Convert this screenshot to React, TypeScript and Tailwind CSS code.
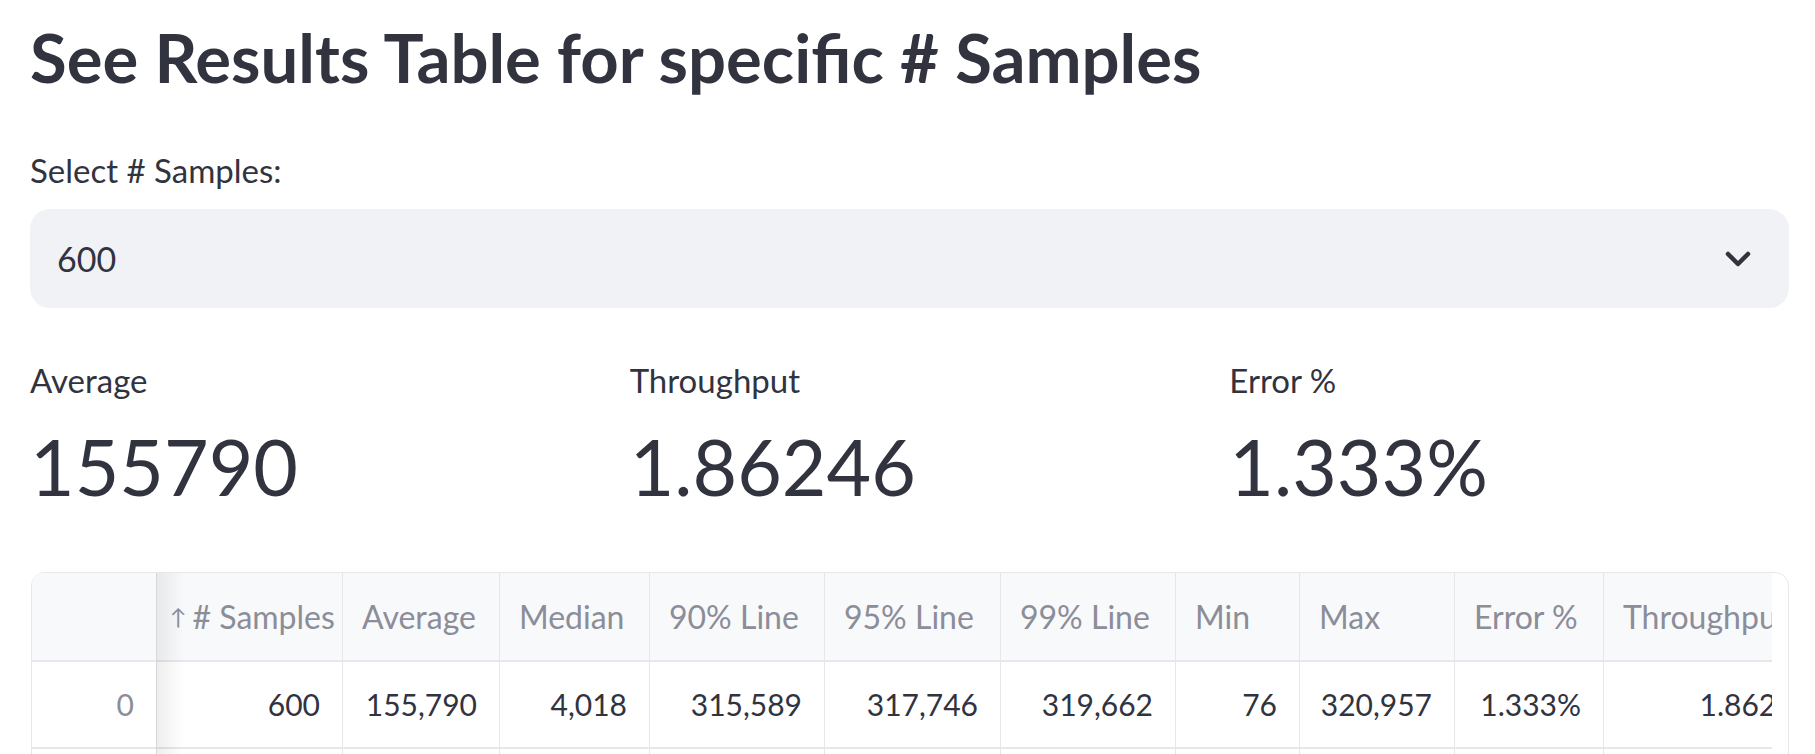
import React from "react";

const cols = [
  { name: "# Samples", w: 186, v: "600", arrow: true },
  { name: "Average", w: 157, v: "155,790" },
  { name: "Median", w: 150, v: "4,018" },
  { name: "90% Line", w: 175, v: "315,589" },
  { name: "95% Line", w: 176, v: "317,746" },
  { name: "99% Line", w: 175, v: "319,662" },
  { name: "Min", w: 124, v: "76" },
  { name: "Max", w: 155, v: "320,957" },
  { name: "Error %", w: 149, v: "1.333%" },
  { name: "Throughput", w: 230, v: "1.86246" },
];

export default function App() {
  return (
    <div
      className="bg-white text-[#31333F] w-[1815px] h-[754px] overflow-hidden pl-[30px] pr-[26px]"
      style={{ fontFamily: "Lato, 'Open Sans', sans-serif" }}
    >
      <div className="pt-[24px] h-[90px] text-[67px] leading-[66px] font-bold whitespace-nowrap">
        See Results Table for specific # Samples
      </div>
      <div className="mt-[64px] text-[33px] leading-[32px]">Select # Samples:</div>
      <div className="mt-[23px] h-[99px] rounded-[20px] bg-[#F0F2F6] flex items-center justify-between pl-[27px] pr-[37px]">
        <span className="text-[34px]">600</span>
        <svg width="28" height="18" viewBox="0 0 28 18" fill="none">
          <path d="M4 4 L14 14 L24 4" stroke="#31333F" strokeWidth="4.5" strokeLinecap="round" strokeLinejoin="round" />
        </svg>
      </div>
      <div className="mt-[56px] grid grid-cols-3 gap-[40px]">
        {[
          ["Average", "155790"],
          ["Throughput", "1.86246"],
          ["Error %", "1.333%"],
        ].map(([l, v]) => (
          <div key={l}>
            <div className="text-[33px] leading-[32px]">{l}</div>
            <div className="mt-[30px] text-[77px] leading-[80px]">{v}</div>
          </div>
        ))}
      </div>
      <div className="mt-[66px] ml-[1px] border border-[#E6E7EA] rounded-[14px] overflow-hidden pr-[16px]">
        <div className="overflow-hidden">
          <div className="flex text-[30px]">
            <div className="w-[125px] shrink-0 border-r border-[#E6E7EA] relative z-10 bg-white">
              <div className="h-[89px] bg-[#F8F9FB] border-b-2 border-[#E6E7EA]" />
              <div className="h-[87px] flex items-center justify-end pr-[22px] text-[#8B8D98] border-b-2 border-[#E6E7EA]">0</div>
              <div className="h-[87px] border-b-2 border-[#E6E7EA]" />
              <div className="absolute top-0 bottom-0 left-full w-[28px] bg-gradient-to-r from-[rgba(0,0,0,0.07)] to-transparent pointer-events-none" />
            </div>
            {cols.map((c) => (
              <div key={c.name} className="shrink-0 border-r border-[#E6E7EA]" style={{ width: c.w }}>
                <div className="h-[89px] bg-[#F8F9FB] border-b-2 border-[#E6E7EA] flex items-center pl-[13px] pr-0 text-[32px] text-[#8B8D98] whitespace-nowrap overflow-hidden">
                  {c.arrow ? (
                    <span className="flex items-center">
                      <span className="text-[22px] mr-[6px]">↑</span>
                      {c.name}
                    </span>
                  ) : (
                    <span className="pl-[6px]">{c.name}</span>
                  )}
                </div>
                <div className="h-[87px] flex items-center justify-end pr-[22px] whitespace-nowrap border-b-2 border-[#E6E7EA]">
                  {c.v}
                </div>
                <div className="h-[87px] border-b-2 border-[#E6E7EA]" />
              </div>
            ))}
          </div>
        </div>
      </div>
    </div>
  );
}
